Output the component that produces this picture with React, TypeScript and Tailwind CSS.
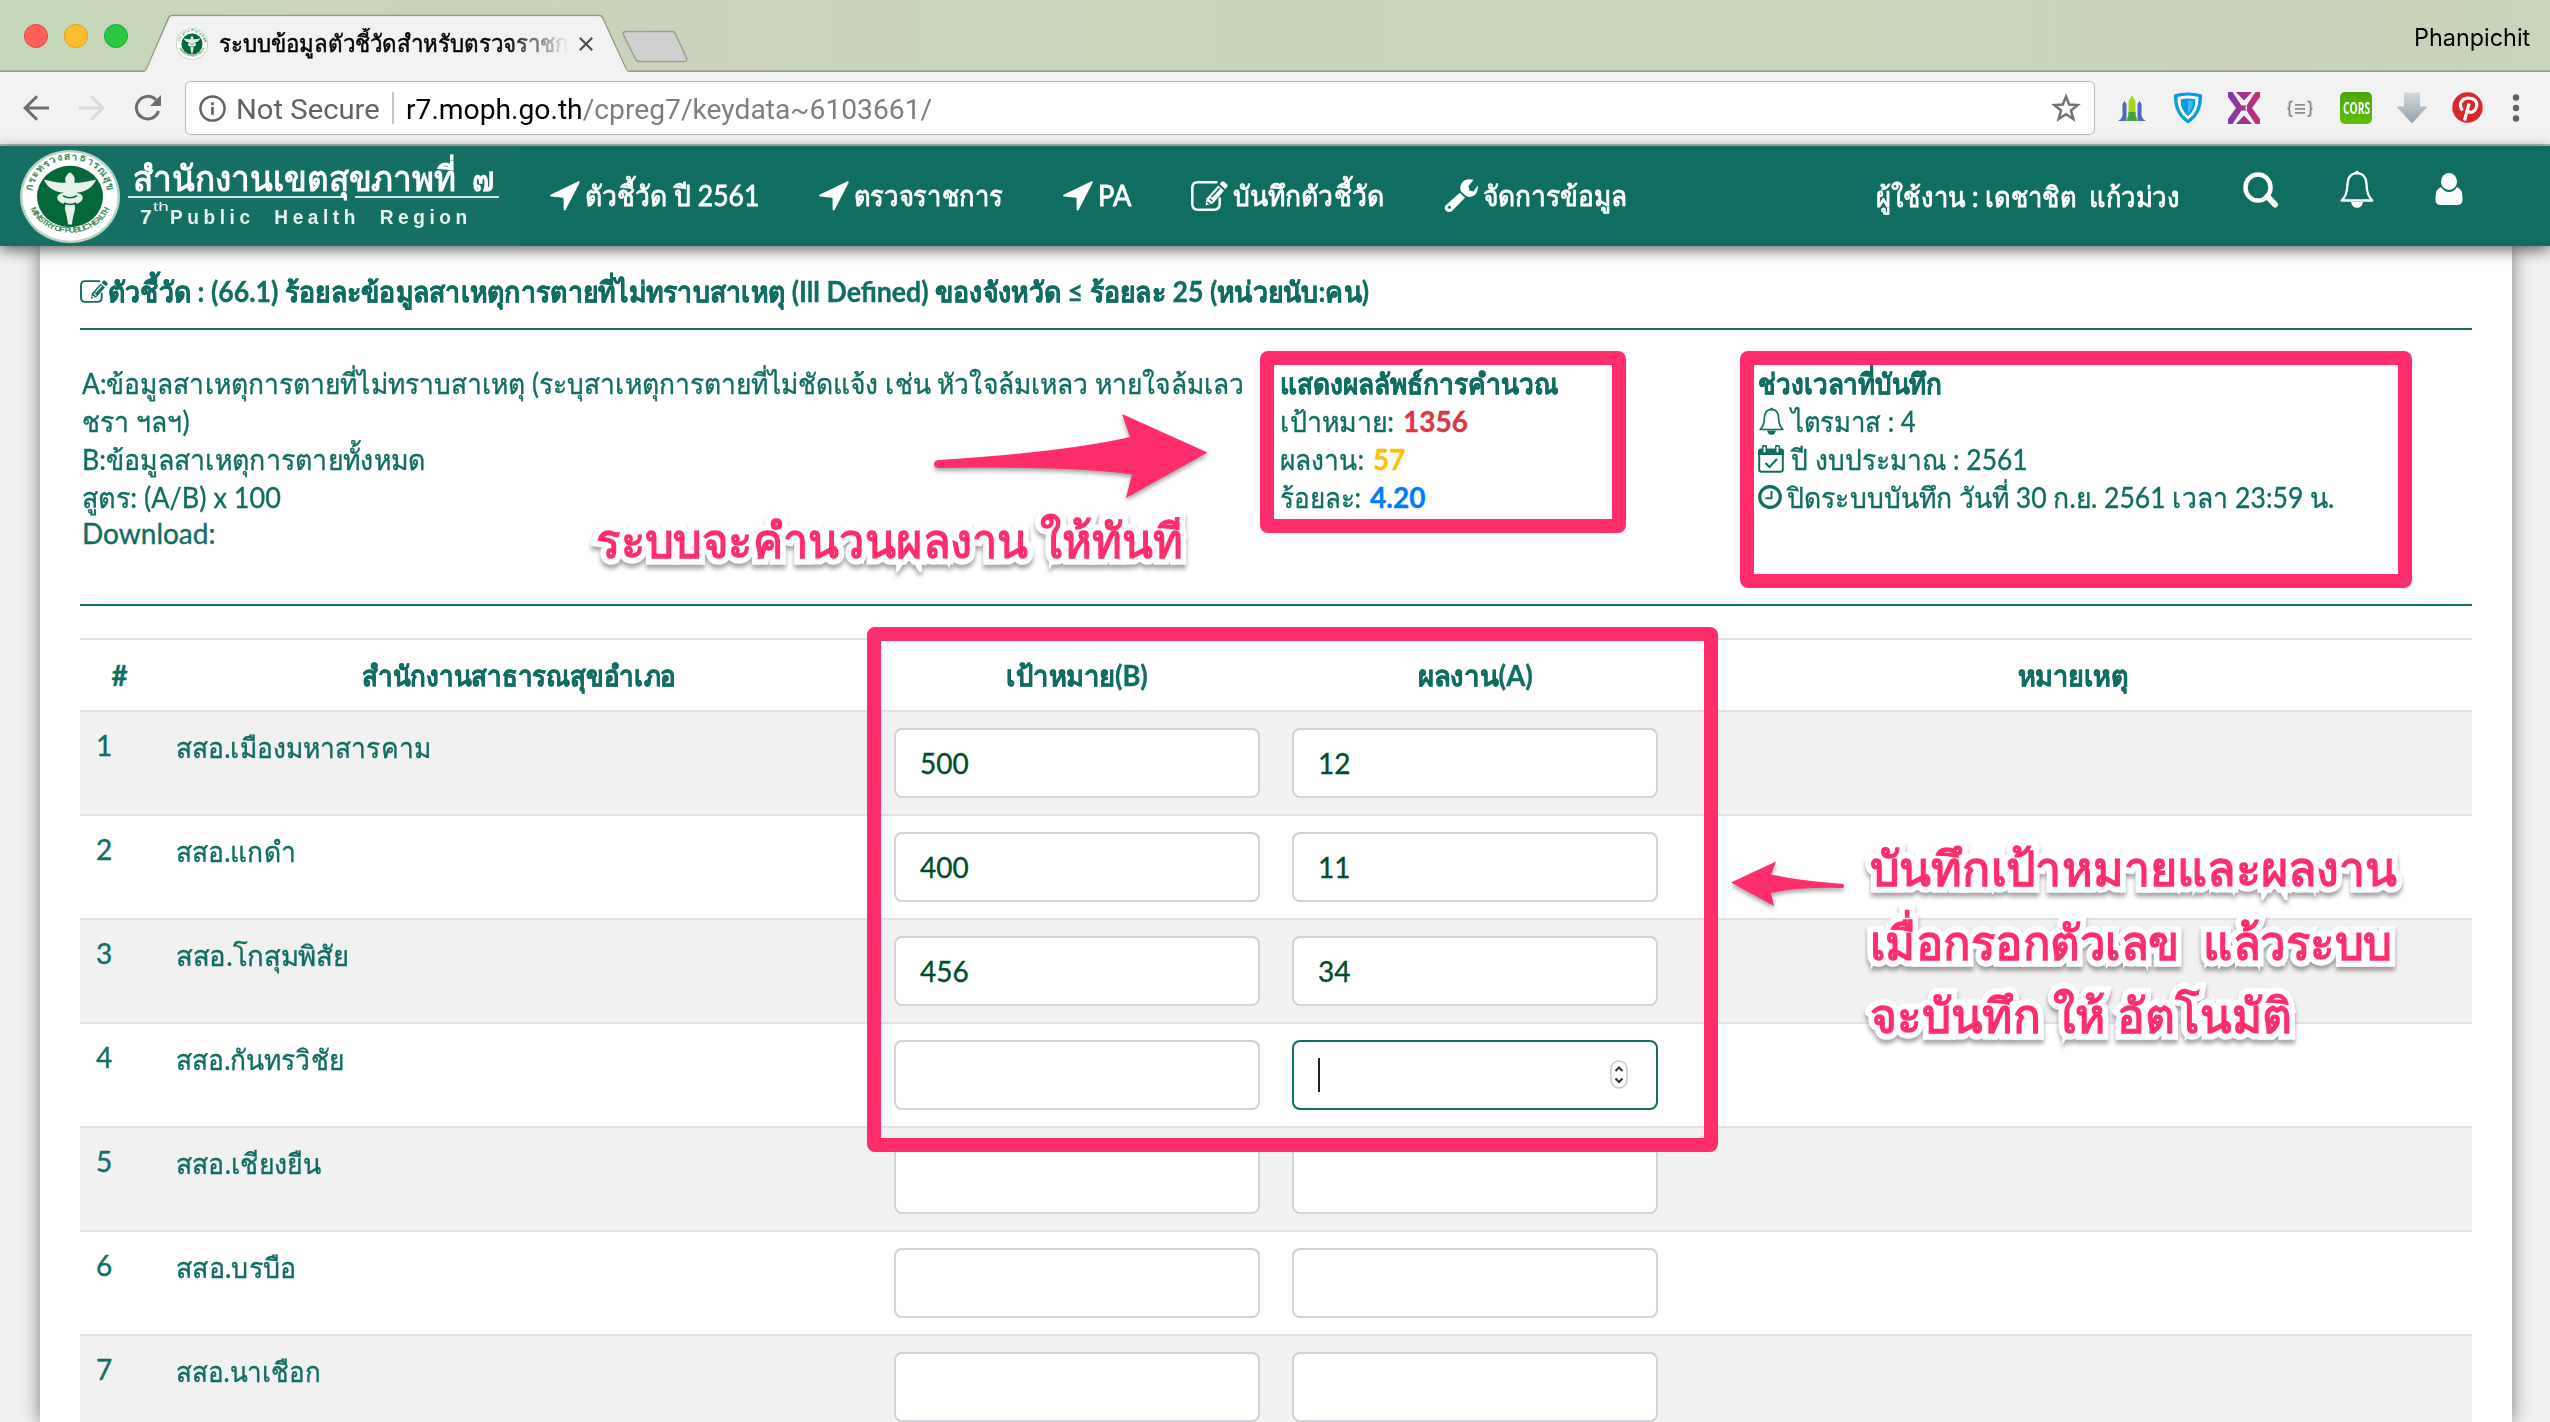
import React, { useLayoutEffect, useRef, useState } from "react";

/* Single line of text whose glyph run is scaled horizontally to a given width. */
function Fit({ w, children, className = "" }: { w: number; children: React.ReactNode; className?: string }) {
  const ref = useRef<HTMLSpanElement>(null);
  const [scale, setScale] = useState(1);
  useLayoutEffect(() => {
    const measure = () => {
      if (ref.current && ref.current.offsetWidth > 0) setScale(w / ref.current.offsetWidth);
    };
    measure();
    document.fonts?.ready.then(measure);
  }, [w]);
  return (
    <span className={"inline-block whitespace-nowrap " + className} style={{ width: w }}>
      <span ref={ref} className="inline-block origin-left whitespace-nowrap" style={{ transform: `scaleX(${scale})` }}>
        {children}
      </span>
    </span>
  );
}

function Seal({ className }: { className: string }) {
  return (
    <svg viewBox="0 0 100 100" preserveAspectRatio="none" className={className}>
      <circle cx="50" cy="50" r="50" fill="#b9d3c4" />
      <circle cx="50" cy="50" r="47.5" fill="#ffffff" />
      <circle cx="50" cy="50" r="33" fill="#056839" />
      <path id="seal-top" d="M13 57 A38 38 0 1 1 87 57" fill="none" />
      <path id="seal-bot" d="M9 60 A43.5 43.5 0 0 0 91 60" fill="none" />
      <text fontSize="10.5" fontWeight="700" fill="#3f8d64" fontFamily="Noto Sans, sans-serif">
        <textPath href="#seal-top" startOffset="50%" textAnchor="middle" textLength="110">กระทรวงสาธารณสุข</textPath>
      </text>
      <text fontSize="8.5" fontWeight="700" fill="#3f8d64" fontFamily="Liberation Sans, sans-serif">
        <textPath href="#seal-bot" startOffset="50%" textAnchor="middle" textLength="100">MINISTRY OF PUBLIC HEALTH</textPath>
      </text>
      <path d="M50 24 c4 3 6 7 4 11 c6 1 12 -1 22 -3 c-3 8 -10 13 -20 14 c6 1 8 4 6 8 c-2 3 -6 4 -8 4 c3 5 -1 9 -2 22 h-4 c-1 -13 -5 -17 -2 -22 c-2 0 -6 -1 -8 -4 c-2 -4 0 -7 6 -8 c-10 -1 -17 -6 -20 -14 c10 2 16 4 22 3 c-2 -4 0 -8 4 -11z" fill="#e6f1ea" />
      <path d="M43 49 c4 3 10 3 14 0 M44 57 c4 2 8 2 12 0" stroke="#056839" strokeWidth="1.6" fill="none" />
    </svg>
  );
}

const LocationArrow = () => (
  <svg viewBox="0 0 30 30" className="h-[30px] w-[30px]" fill="#fff">
    <path d="M28 .4 C29.3 0 30 .8 29.5 2 L15.8 28.6 C15 30 13.6 29.7 13.6 28.2 L13.6 17.6 Q13.6 16.8 12.8 16.7 L1.2 15.6 C-.3 15.4 -.4 14 1 13.4 Z" />
  </svg>
);

const EditIcon = ({ className }: { className: string }) => (
  <svg viewBox="0 0 37 30" className={className} fill="none" stroke="currentColor">
    <path d="M25.5 1.3 H7 Q1.3 1.3 1.3 7 V23 Q1.3 28.7 7 28.7 H23 Q28.7 28.7 28.7 23 V17.5" strokeWidth="2.5" strokeLinecap="round" />
    <path d="M14.5 24.5 L15.8 17.2 L27.2 4.6 L33 9.8 L21.8 22.4 Z" fill="currentColor" stroke="none" />
    <path d="M28.6 3 L31 .6 Q32 -.2 33.2 .8 L36.2 3.6 Q37 4.6 36.2 5.8 L34.2 8.2 Z" fill="currentColor" stroke="none" />
    <path d="M16.2 21 l2.8 2.2 M18.4 17.5 l3 2.8 M20.5 16.2 l8.2 -9" stroke="var(--hole)" strokeWidth="1.5" />
  </svg>
);

const Wrench = () => (
  <svg viewBox="0 0 34 34" className="h-[34px] w-[34px]" fill="#fff">
    <path d="M29.5 .9 L24.4 7 L25.4 11.6 L29.4 12.6 L33.6 6.5 C34.6 11 32.5 16.6 27 17.8 C24.8 18.2 23 17.6 21.4 16.6 L17 12.4 C15 8.4 17 3 21 1.2 C24 -.1 27 -.2 29.5 .9Z" />
    <path d="M15.8 13.8 L21 18.8 L8 32 C4.500 35.500 -1.500 30 1.500 26.500 Z" />
    <circle cx="5.500" cy="28.300" r="1.500" fill="#106d62" />
  </svg>
);

const BellIcon = ({ className }: { className: string }) => (
  <svg viewBox="0 0 36 38" className={className} fill="none" stroke="currentColor">
    <path d="M18 3.200 C11 3.400 8.600 8.500 8.400 15 C8.200 23 6.500 27 2.600 30.500 H33.400 C29.500 27 27.800 23 27.600 15 C27.400 8.500 25 3.400 18 3.200Z" strokeWidth="2.300" strokeLinejoin="round" />
    <path d="M16.300 3.500 V1.800 Q18 -.6 19.700 1.800 V3.500Z M12 32 H24 Q23 37.800 18 37.800 Q13 37.800 12 32Z" fill="currentColor" stroke="none" />
  </svg>
);

const nav = [
  { icon: <LocationArrow />, text: "ตัวชี้วัด ปี 2561", w: 174 },
  { icon: <LocationArrow />, text: "ตรวจราชการ", w: 149 },
  { icon: <LocationArrow />, text: "PA", w: 33 },
  { icon: <EditIcon className="h-[30px] w-[37px]" />, text: "บันทึกตัวชี้วัด", w: 151 },
  { icon: <Wrench />, text: "จัดการข้อมูล", w: 144 },
];

const rows = [
  { name: "สสอ.เมืองมหาสารคาม", w: 255, b: "500", a: "12" },
  { name: "สสอ.แกดำ", w: 120, b: "400", a: "11" },
  { name: "สสอ.โกสุมพิสัย", w: 173, b: "456", a: "34" },
  { name: "สสอ.กันทรวิชัย", w: 168, b: "", a: "", active: true },
  { name: "สสอ.เชียงยืน", w: 145, b: "", a: "" },
  { name: "สสอ.บรบือ", w: 121, b: "", a: "" },
  { name: "สสอ.นาเชือก", w: 145, b: "", a: "" },
];

function Field({ value, active }: { value: string; active?: boolean }) {
  return (
    <div
      className={
        "flex h-[70px] items-center rounded-[8px] border-2 bg-white pl-6 pr-[28px] text-[28px] leading-[38px] text-[#004d29] " +
        (active ? "border-[#106d62]" : "border-[#ced4da]")
      }
    >
      {value}
      {active && (
        <>
          <span className="h-[34px] w-[2px] bg-[#222]" />
          <svg viewBox="0 0 18 30" className="ml-auto h-[30px] w-[18px]" fill="none">
            <rect x="1" y="1" width="16" height="27" rx="8" fill="#fff" stroke="#c9c9c9" strokeWidth="1.500" />
            <path d="M5.500 11 L9 7.500 L12.500 11 M5.500 18.500 L9 22 L12.500 18.500" stroke="#333" strokeWidth="2" />
          </svg>
        </>
      )}
    </div>
  );
}

const noteText =
  "font-['Noto_Sans',sans-serif] font-bold text-[#ff2d6c] [paint-order:stroke_fill] [-webkit-text-stroke:12px_white] [filter:drop-shadow(0_4px_2px_rgba(0,0,0,0.35))]";

function BrowserChrome() {
  return (
    <>
      <div className="relative flex h-[72px] items-start bg-[linear-gradient(90deg,#c6d7ba_0%,#c9d4b8_12%,#cbd2bb_25%,#c8d4bb_40%,#c9d5b9_70%,#c8d4bd_78%,#cad1bb_88%,#c7d5b9_100%)]">
        <svg viewBox="0 0 2550 72" className="absolute inset-0 h-[72px] w-[2550px]" fill="none">
          <path d="M0 71.300 H144 Q146 71 147 68 L169 17 Q170 15.500 172 15.500 H599 Q601.500 15.500 602.500 17.500 L626 69 Q627 71.300 629 71.300 H2550 V72 H0Z" fill="none" stroke="#8d9b82" strokeWidth="1.500" />
          <path d="M144 72 Q146 71 147.500 68 L169.500 18 Q170 16.300 172 16.300 H599 Q601 16.300 602 18 L625.500 69 Q627 72 629 72Z" fill="#f2f2f2" />
          <path d="M626 31.500 H672 Q674.500 31.500 675.500 34 L686.500 58 Q687.500 61.500 684 61.500 H640 Q636.500 61.500 635 58 L623.500 35 Q622 31.500 626 31.500Z" fill="#d0d0d0" stroke="#97a08f" strokeWidth="1.500" />
        </svg>
        <div className="relative flex gap-4 pl-6 pt-6">
          <span className="h-6 w-6 rounded-full border border-[#e2463f] bg-[#ff5f57]" />
          <span className="h-6 w-6 rounded-full border border-[#e1a116] bg-[#ffbd2e]" />
          <span className="h-6 w-6 rounded-full border border-[#12ac28] bg-[#28c940]" />
        </div>
        <div className="relative ml-[48px] flex items-center pt-[28px]">
          <Seal className="h-[32px] w-[32px]" />
          <span className="ml-[11px] w-[350px] overflow-hidden text-[24px] leading-[32px] text-black [-webkit-text-stroke:0.5px_currentColor] [mask-image:linear-gradient(90deg,#000_82%,transparent_100%)] font-[Roboto,'Noto_Sans',sans-serif]">
            <Fit w={350}>ระบบข้อมูลตัวชี้วัดสำหรับตรวจราชก</Fit>
          </span>
          <svg viewBox="0 0 14 14" className="ml-[10px] h-[14px] w-[14px]" stroke="#4b4f4b" strokeWidth="2.200">
            <path d="M.8 .8 L13.200 13.200 M13.200 .8 L.8 13.200" />
          </svg>
        </div>
        <div className="relative ml-auto pr-5 pt-[22px] text-[24px] leading-[32px] text-black font-[Inter,sans-serif]">
          <Fit w={116}>Phanpichit</Fit>
        </div>
      </div>
      <div className="flex h-[74px] items-center border-b-2 border-[#b4b6b4] bg-[#f2f2f2]">
        <svg viewBox="0 0 26 26" className="ml-[23px] h-[26px] w-[26px]" fill="none" stroke="#6a6e72" strokeWidth="3">
          <path d="M26 13 H2.500 M14 1.200 L2.200 13 L14 24.800" />
        </svg>
        <svg viewBox="0 0 26 26" className="ml-[30px] h-[26px] w-[26px]" fill="none" stroke="#d8d9da" strokeWidth="3">
          <path d="M0 13 H23.500 M12 1.200 L23.800 13 L12 24.800" />
        </svg>
        <svg viewBox="0 0 28 28" className="ml-[29px] h-[28px] w-[28px]" fill="none">
          <path d="M24.500 17 A11.300 11.300 0 1 1 22 6" stroke="#6a6e72" strokeWidth="3" />
          <path d="M27 1 V12 H16Z" fill="#6a6e72" />
        </svg>
        <div className="ml-[23px] flex h-[54px] w-[1910px] items-center rounded-[6px] border-[1.500px] border-[#b8bab8] bg-white pl-[13px] text-[28px] leading-[32px] font-[Roboto,sans-serif]">
          <svg viewBox="0 0 28 28" className="h-[27px] w-[27px]" fill="none" stroke="#5f6368">
            <circle cx="14" cy="14" r="12.500" strokeWidth="2.600" />
            <path d="M14 12.500 V20.500 M14 7.500 V10.500" strokeWidth="2.800" />
          </svg>
          <Fit w={144} className="ml-[10px] pt-[3px] text-[#5f6368]">Not Secure</Fit>
          <span className="ml-[12px] h-8 w-[1.500px] bg-[#c4c4c4]" />
          <Fit w={526} className="ml-[12px] pt-[3px] text-[#7c7f82]">
            <span className="text-black">r7.moph.go.th</span>/cpreg7/keydata~6103661/
          </Fit>
          <svg viewBox="0 0 30 30" className="ml-auto mr-[13px] h-[30px] w-[30px]" fill="none" stroke="#6f7275" strokeWidth="2.500">
            <path d="M15 3.500 L18.200 11.500 L26.600 12 L20 17.500 L22.300 26 L15 21.200 L7.700 26 L10 17.500 L3.400 12 L11.800 11.500Z" />
          </svg>
        </div>
        <div className="ml-[21px] flex items-center gap-[24px]">
          <svg viewBox="0 0 32 32" className="h-8 w-8">
            <path d="M2 29 Q6 27 6.500 23 V12 L8.500 9 L10.500 12 V29Z" fill="#4a67c4" />
            <path d="M30 29 Q26 27 25.500 23 V12 L23.500 9 L21.500 12 V29Z" fill="#4a67c4" />
            <path d="M9.500 29 Q12.500 26 12.500 22 V9 L16 3.500 L19.500 9 V22 Q19.500 26 22.500 29Z" fill="#a5d61c" />
            <path d="M12.500 20 h7 v3 l2 6 h-11 l2 -6z" fill="#3fa53a" />
          </svg>
          <svg viewBox="0 0 32 32" className="h-8 w-8" fill="none">
            <path d="M2 2.500 Q16 -1.500 30 2.500 Q31 22 16 31.500 Q1 22 2 2.500Z" fill="#0a9be0" />
            <path d="M5.500 5 Q16 2 26.500 5 Q27 20 16 27.500 Q5 20 5.500 5Z" fill="#fff" />
            <path d="M8.500 7.500 Q16 5.500 23.500 7.500 Q23.500 18.500 16 24 Q8.500 18.500 8.500 7.500Z" fill="#0a9be0" />
            <path d="M16 8.500 Q19 8.500 21 9.300 Q20.500 17 16 21.500Z" fill="#3dbdf2" />
          </svg>
          <svg viewBox="0 0 32 32" className="h-8 w-8">
            <defs>
              <linearGradient id="xg" gradientUnits="userSpaceOnUse" x1="0" y1="0" x2="32" y2="0">
                <stop offset="0" stopColor="#7b3aa8" />
                <stop offset="1" stopColor="#c32e74" />
              </linearGradient>
            </defs>
            <path d="M0 0 L4.500 0 L15 16 L4.500 32 H0 V27 L8 16 L0 5Z M32 0 H27.500 L17 16 L27.500 32 H32 V27 L24 16 L32 5Z M13 13.500 H19 V18.500 H13Z M8 0 H24 L16 8.500Z M8 32 H24 L16 23.500Z" fill="url(#xg)" />
          </svg>
          <svg viewBox="0 0 32 32" className="h-8 w-8" fill="none" stroke="#8b8b8b" strokeWidth="1.800">
            <path d="M8.500 9.500 H7.500 Q5.500 9.500 5.500 11.500 V14.500 Q5.500 16.500 3.500 16.500 Q5.500 16.500 5.500 18.500 V22 Q5.500 24 7.500 24 H8.500 M23.500 9.500 H24.500 Q26.500 9.500 26.500 11.500 V14.500 Q26.500 16.500 28.500 16.500 Q26.500 16.500 26.500 18.500 V22 Q26.500 24 24.500 24 H23.500 M11 12.800 H21 M11 16.800 H21 M11 20.800 H21" />
          </svg>
          <span className="flex h-8 w-8 items-center justify-center rounded-[5px] bg-[linear-gradient(#4aa60a,#5fbf0c)] text-[16px] font-bold leading-none text-white font-['Open_Sans',sans-serif]">
            <Fit w={27}>CORS</Fit>
          </span>
          <svg viewBox="0 0 32 32" className="h-8 w-8">
            <defs>
              <linearGradient id="dg" x1="0" y1="0" x2="0" y2="1">
                <stop offset="0" stopColor="#d3d8da" />
                <stop offset="1" stopColor="#93a4ab" />
              </linearGradient>
            </defs>
            <path d="M8 .5 H24 V14.500 H31.500 L16 31.500 L.5 14.500 H8Z" fill="url(#dg)" />
          </svg>
          <svg viewBox="0 0 32 32" className="h-8 w-8" fill="none">
            <circle cx="15.500" cy="15.500" r="15.200" fill="#d9282c" />
            <path d="M10.300 18.500 C5.500 11 11 6 16.500 6 C22.500 6 25.500 10 24.500 14.500 C23.500 19.500 18.500 22 15.800 18.800 M17 11.500 L12.500 28.500" stroke="#fff" strokeWidth="3.200" />
          </svg>
          <svg viewBox="0 0 8 28" className="ml-[4px] h-[28px] w-2" fill="#5f6368">
            <circle cx="4" cy="3.500" r="3.200" />
            <circle cx="4" cy="14" r="3.200" />
            <circle cx="4" cy="24.500" r="3.200" />
          </svg>
        </div>
      </div>
    </>
  );
}

function SiteHeader() {
  return (
    <header className="relative z-10 flex h-[100px] items-start bg-[#106d62] text-[28px] text-white shadow-[0_4px_14px_rgba(0,0,0,0.6)]">
      <div className="flex h-[100px] w-[519px] items-start bg-[#156f65]">
        <Seal className="ml-[20px] mt-[4px] h-[93px] w-[100px]" />
        <div className="ml-[8px] w-[371px] pt-[14px]">
          <div className="flex h-[36px] items-start justify-between pl-[5px] pr-[5px] text-[35px] font-bold leading-[36px] font-['Noto_Sans',sans-serif]">
            <Fit w={323}>สำนักงานเขตสุขภาพที่</Fit>
            <Fit w={22}>๗</Fit>
          </div>
          <div className="flex gap-[12px]">
            <span className="h-[2px] w-[215px] bg-[#d5e6e3]" />
            <span className="h-[2px] flex-1 bg-[#d5e6e3]" />
          </div>
          <div className="flex pl-[12px] pt-[5px] text-[21px] font-bold leading-[28px] text-[#e8f2f0] font-['Liberation_Sans',sans-serif]">
            7
            <span className="-mt-[3px] ml-[1px] text-[13px] font-normal leading-[13px]">
              <Fit w={16}>th</Fit>
            </span>
            <Fit w={302} className="ml-[1px] tracking-[5px]">Public&nbsp; Health&nbsp; Region</Fit>
          </div>
        </div>
      </div>
      <nav className="ml-[31px] flex h-[100px] items-center gap-[60px] leading-[38px] [--hole:#106d62] [-webkit-text-stroke:0.8px_currentColor]">
        {nav.map((n) => (
          <div key={n.text} className="flex items-center gap-[5px]">
            {n.icon}
            <Fit w={n.w} className="-mt-[2px]">{n.text}</Fit>
          </div>
        ))}
      </nav>
      <div className="ml-auto flex h-[100px] items-start pr-[87px] leading-[38px]">
        <Fit w={304} className="mt-[31px] [-webkit-text-stroke:0.8px_currentColor]">ผู้ใช้งาน : เดชาชิต&nbsp; แก้วม่วง</Fit>
        <svg viewBox="0 0 36 36" className="ml-[63px] mt-[26px] h-[36px] w-[36px]" fill="none" stroke="#fff">
          <ellipse cx="15" cy="15.500" rx="12.500" ry="13" strokeWidth="4.500" />
          <path d="M24.500 24.500 L32 32.500" strokeWidth="6" strokeLinecap="round" />
        </svg>
        <BellIcon className="ml-[60px] mt-[24px] h-[38px] w-[36px]" />
        <svg viewBox="0 0 28 32" className="ml-[60px] mt-[27px] h-[32px] w-[28px]" fill="#fff">
          <ellipse cx="14" cy="8.500" rx="8" ry="8.500" />
          <path d="M6 14 Q9 19 14 19 Q19 19 22 14 Q27.500 16 27.500 24 V27 Q27.500 32 22 32 H6 Q.5 32 .5 27 V24 Q.5 16 6 14Z" />
        </svg>
      </div>
    </header>
  );
}

function Summary() {
  return (
    <section className="flex h-[276px] items-start border-b-2 border-[#156f65] pt-[34px] leading-[38px]">
      <div className="w-[1200px] pl-[2px]">
        <div><Fit w={1162}>A:ข้อมูลสาเหตุการตายที่ไม่ทราบสาเหตุ (ระบุสาเหตุการตายที่ไม่ชัดแจ้ง เช่น หัวใจล้มเหลว หายใจล้มเลว</Fit></div>
        <div><Fit w={108}>ชรา ฯลฯ)</Fit></div>
        <div><Fit w={343}>B:ข้อมูลสาเหตุการตายทั้งหมด</Fit></div>
        <div><Fit w={199}>สูตร: (A/B) x 100</Fit></div>
        <div className="leading-[34px]"><Fit w={133}>Download:</Fit></div>
      </div>
      <div className="w-[478px]">
        <div className="font-bold"><Fit w={278}>แสดงผลลัพธ์การคำนวณ</Fit></div>
        <div className="flex gap-[9px]"><Fit w={114}>เป้าหมาย:</Fit><b className="text-[#dc3545]">1356</b></div>
        <div className="flex gap-[9px]"><Fit w={84}>ผลงาน:</Fit><b className="text-[#ffc107]">57</b></div>
        <div className="flex gap-[9px]"><Fit w={81}>ร้อยละ:</Fit><b className="text-[#007bff]">4.20</b></div>
      </div>
      <div>
        <div className="font-bold"><Fit w={184}>ช่วงเวลาที่บันทึก</Fit></div>
        <div className="flex items-center gap-[6px]">
          <BellIcon className="h-[28px] w-[27px]" />
          <Fit w={125}>ไตรมาส : 4</Fit>
        </div>
        <div className="flex items-center gap-[7px]">
          <svg viewBox="0 0 26 28" className="h-[28px] w-[26px]" fill="none">
            <path d="M1.200 9 V24.500 Q1.200 26.800 3.500 26.800 H22.500 Q24.800 26.800 24.800 24.500 V9" stroke="#106d62" strokeWidth="2" />
            <path d="M0 10 V6 Q0 3.500 2.500 3.500 H23.500 Q26 3.500 26 6 V10Z" fill="#106d62" />
            <path d="M6.500 6.500 V2 M19.500 6.500 V2" stroke="#106d62" strokeWidth="5" strokeLinecap="round" />
            <path d="M6.500 6.500 V2.500 M19.500 6.500 V2.500" stroke="#fff" strokeWidth="2" strokeLinecap="round" />
            <path d="M7.500 18 L11.500 22 L19 14" stroke="#106d62" strokeWidth="2" />
          </svg>
          <Fit w={236}>ปี งบประมาณ : 2561</Fit>
        </div>
        <div className="flex items-center gap-[5px]">
          <svg viewBox="0 0 24 24" className="h-[24px] w-[24px]" fill="none" stroke="#106d62">
            <circle cx="12" cy="12" r="10.300" strokeWidth="3.200" />
            <path d="M13.500 6 V13.200 H7.500" strokeWidth="2" />
          </svg>
          <Fit w={547}>ปิดระบบบันทึก วันที่ 30 ก.ย. 2561 เวลา 23:59 น.</Fit>
        </div>
      </div>
    </section>
  );
}

const grid = "grid grid-cols-[79px_719px_398px_398px_798px] border-t-2 border-[#dee2e6] ";

export default function App() {
  return (
    <div className="relative h-[1422px] w-[2550px] overflow-hidden bg-[#f1f1f1] font-[Lato,'Noto_Sans',sans-serif] text-[28px] text-[#106d62]">
      <BrowserChrome />
      <SiteHeader />
      <main className="mx-[40px] mr-[38px] h-[1176px] bg-white px-[40px] shadow-[0_0_18px_rgba(0,0,0,0.5)] [--hole:#fff] [-webkit-text-stroke:0.35px_currentColor]">
        <div className="flex h-[84px] items-center border-b-2 border-[#156f65] pt-[8px] font-bold leading-[38px]">
          <EditIcon className="h-[23px] w-[28px]" />
          <Fit w={1261}>ตัวชี้วัด : (66.1) ร้อยละข้อมูลสาเหตุการตายที่ไม่ทราบสาเหตุ (Ill Defined) ของจังหวัด ≤ ร้อยละ 25 (หน่วยนับ:คน)</Fit>
        </div>
        <Summary />
        <div className="mt-[32px] leading-[38px]">
          <div className={grid + "h-[72px] items-center justify-items-center font-bold"}>
            <span>#</span>
            <Fit w={314}>สำนักงานสาธารณสุขอำเภอ</Fit>
            <Fit w={142}>เป้าหมาย(B)</Fit>
            <Fit w={115}>ผลงาน(A)</Fit>
            <Fit w={110}>หมายเหตุ</Fit>
          </div>
          {rows.map((r, i) => (
            <div key={r.name} className={grid + "h-[104px] " + (i % 2 === 0 ? "bg-[#f1f1f1]" : "bg-white")}>
              <span className="pl-4 pt-[14px]">{i + 1}</span>
              <span className="pl-[17px] pt-[16px]"><Fit w={r.w}>{r.name}</Fit></span>
              <div className="px-4 pt-4"><Field value={r.b} /></div>
              <div className="px-4 pt-4"><Field value={r.a} active={r.active} /></div>
              <span />
            </div>
          ))}
        </div>
      </main>

      <div className="absolute left-[1260px] top-[351px] z-20 h-[182px] w-[366px] rounded-[8px] border-[14px] border-[#ff2d6c]" />
      <div className="absolute left-[1740px] top-[351px] z-20 h-[237px] w-[672px] rounded-[8px] border-[14px] border-[#ff2d6c]" />
      <div className="absolute left-[867px] top-[627px] z-20 h-[525px] w-[851px] rounded-[8px] border-[14px] border-[#ff2d6c]" />
      <svg viewBox="0 0 290 100" className="absolute left-[925px] top-[405px] z-20 h-[100px] w-[290px] [filter:drop-shadow(0_3px_2px_rgba(0,0,0,0.35))]">
        <path d="M13 55 Q140 47 205 32 L197 9 L282.500 47.500 L201 93 L207 69.500 Q150 61 13 63 Q9 62 9 59 Q9 56 13 55Z" fill="#ff2d6c" />
      </svg>
      <svg viewBox="0 0 125 60" className="absolute left-[1725px] top-[853px] z-20 h-[60px] w-[125px] [filter:drop-shadow(0_3px_2px_rgba(0,0,0,0.35))]">
        <path d="M6 29.500 L51 8.500 L46 21.500 Q76 28 118 31 Q120 33 118 35 Q72 34 46 40 L49 53Z" fill="#ff2d6c" />
      </svg>
      <div className={"absolute left-[596px] top-[505px] z-20 text-[48px] leading-[70px] " + noteText}>
        <Fit w={587}>ระบบจะคำนวนผลงาน ให้ทันที</Fit>
      </div>
      <div className={"absolute left-[1870px] top-[831px] z-20 flex flex-col text-[48px] leading-[73.500px] " + noteText}>
        <Fit w={527}>บันทึกเป้าหมายและผลงาน</Fit>
        <Fit w={522}>เมื่อกรอกตัวเลข&nbsp; แล้วระบบ</Fit>
        <Fit w={422}>จะบันทึก ให้ อัตโนมัติ</Fit>
      </div>
    </div>
  );
}
